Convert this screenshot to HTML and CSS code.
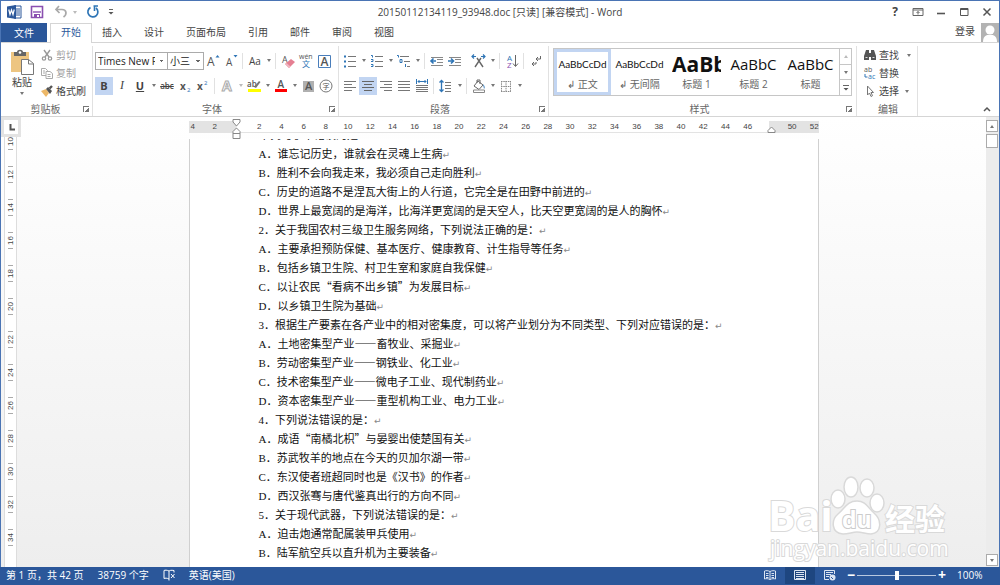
FILE: index.html
```html
<!DOCTYPE html>
<html lang="zh-CN">
<head>
<meta charset="utf-8">
<title>20150112134119_93948.doc - Word</title>
<link rel="stylesheet" href="styles.css">
</head>
<body>
<div class="window">
  <header class="titlebar">
    <div class="quick">
      <svg class="ic16" viewBox="0 0 16 16"><path d="M8 2h7v12H8z" fill="#fff" stroke="#2b579a"/><path d="M9 5h5M9 7h5M9 9h5M9 11h5" stroke="#2b579a"/><path d="M1 2.500L10 1v14L1 13.500z" fill="#2b579a"/><path d="M2.800 5.500l1.200 5 1.500-4.500 1.500 4.500 1.200-5" fill="none" stroke="#fff" stroke-width="1.200"/></svg>
      <button class="tool save" aria-label="保存"><svg class="ic14" viewBox="0 0 14 14"><path d="M1.500 1.500h11v11h-11z" fill="none" stroke="#8a4fb0" stroke-width="1.600"/><path d="M3 7h8" stroke="#8a4fb0" stroke-width="1.400"/><path d="M4 9h6v4H4z" fill="#8a4fb0"/><path d="M7 10h2v2H7z" fill="#fff"/></svg></button>
      <button class="tool undo" aria-label="撤消"><svg class="ic14" viewBox="0 0 14 14"><path d="M5 1L2 4.500 5.500 8M2 4.500h6c5 0 5 5 1.500 7.500" fill="none" stroke="#a9a9a9" stroke-width="1.700"/></svg></button>
      <i class="caret pale"></i>
      <button class="tool redo" aria-label="重复"><svg class="ic14" viewBox="0 0 14 14"><path d="M4.500 2.500a5 5 0 1 0 5.500.5" fill="none" stroke="#2e75b6" stroke-width="1.700"/><path d="M7.500 1H12M8.500 1v5" fill="none" stroke="#2e75b6" stroke-width="1.600"/></svg></button>
      <button class="tool more" aria-label="自定义快速访问工具栏"><svg class="ic8" viewBox="0 0 8 8"><path d="M2 1.500h4" stroke="#666"/><path d="M1.500 4h5L4 6.500z" fill="#555"/></svg></button>
    </div>
    <h1 class="title">20150112134119_93948.doc [只读] [兼容模式] - Word</h1>
    <div class="winctl">
      <button class="tool help" aria-label="帮助">?</button>
      <button class="tool" aria-label="功能区显示选项"><svg class="ic12" viewBox="0 0 12 12"><path d="M1 2.500h10v7H1zM1 4h10" fill="none" stroke="#666"/><path d="M6 8.500V5.500M4.500 7L6 5.500 7.500 7" fill="none" stroke="#666"/></svg></button>
      <button class="tool" aria-label="最小化"><svg class="ic12" viewBox="0 0 12 12"><path d="M2 7.500h8" stroke="#555" stroke-width="1.600"/></svg></button>
      <button class="tool" aria-label="最大化"><svg class="ic12" viewBox="0 0 12 12"><path d="M2.500 2.500h7.500v7H2.500zM2.500 3.500H10" fill="none" stroke="#555"/></svg></button>
      <button class="tool" aria-label="关闭"><svg class="ic12" viewBox="0 0 12 12"><path d="M2.500 2.500l7 7M9.500 2.500l-7 7" stroke="#555" stroke-width="1.500"/></svg></button>
    </div>
  </header>

  <nav class="tabs">
    <button class="file">文件</button>
    <button class="tab current">开始</button>
    <button class="tab">插入</button>
    <button class="tab">设计</button>
    <button class="tab">页面布局</button>
    <button class="tab">引用</button>
    <button class="tab">邮件</button>
    <button class="tab">审阅</button>
    <button class="tab">视图</button>
    <a class="login" href="#">登录</a>
    <svg class="avatar" viewBox="0 0 18 19"><path d="M0 0h18v19H0z" fill="#b3b3b3"/><circle cx="9" cy="7" r="4.500" fill="#fff"/><path d="M2 19c0-5 2.500-7 5-7h4c2.500 0 5 2 5 7z" fill="#fff"/></svg>
  </nav>

  <section class="ribbon">
    <div class="group clipboard">
      <div class="clip">
        <button class="paste">
          <svg class="ic26" viewBox="0 0 26 26"><path d="M2 3h18v20H2z" fill="#edc581"/><path d="M5 3h3c0-3 6-3 6 0h3v4H5z" fill="#666"/><circle cx="11" cy="3.500" r="1.300" fill="#fff"/><path d="M12.500 10.500h7l5 4v11h-12z" fill="#fff" stroke="#777"/><path d="M19.500 10.500v4.500h5" fill="none" stroke="#777"/></svg>
          <span>粘贴</span><i class="caret"></i>
        </button>
        <div class="cliplist">
          <button class="line dim"><svg class="ic12" viewBox="0 0 12 12"><path d="M3 1l5 7M9 1L4 8" stroke="#999" stroke-width="1.400"/><circle cx="3" cy="9.500" r="1.700" fill="none" stroke="#999" stroke-width="1.200"/><circle cx="9" cy="9.500" r="1.700" fill="none" stroke="#999" stroke-width="1.200"/></svg>剪切</button>
          <button class="line dim"><svg class="ic12" viewBox="0 0 12 12"><path d="M.5 1.500h4l2 2v5h-6z" fill="#fff" stroke="#aaa"/><path d="M5 4.500h4l2.500 2v5H5z" fill="#fff" stroke="#aaa"/><path d="M6.500 7.500h3M6.500 9.500h3M2 4h2M2 6h2" stroke="#aaa"/></svg>复制</button>
          <button class="line"><svg class="ic12" viewBox="0 0 12 12"><path d="M0 6l5-2 3 4-3 4z" fill="#edb868"/><path d="M5 4l2-2 4 4-2 3z" fill="#555"/><path d="M8.500 3.500L11 1" stroke="#555" stroke-width="2.400"/></svg>格式刷</button>
        </div>
      </div>
      <div class="caption"><span>剪贴板</span><button class="launch" aria-label="剪贴板选项"></button></div>
    </div>

    <div class="group">
      <div class="row">
        <select class="combo face" aria-label="字体"><option>Times New Roman</option></select>
        <select class="combo size" aria-label="字号"><option>小三</option></select>
        <button class="tool" aria-label="增大字号"><svg class="ic16" viewBox="0 0 16 16"><text x="2" y="13" font-size="12">A</text><path d="M10.500 4.500h4L12.500 2z" fill="#2e75b6"/></svg></button>
        <button class="tool" aria-label="减小字号"><svg class="ic16" viewBox="0 0 16 16"><text x="3" y="13" font-size="10">A</text><path d="M10.500 2h4l-2 2.500z" fill="#2e75b6"/></svg></button>
        <i class="sep"></i>
        <button class="tool" aria-label="更改大小写">Aa</button><i class="caret"></i>
        <i class="sep"></i>
        <button class="tool" aria-label="清除格式"><svg class="ic16" viewBox="0 0 16 16"><text x="2" y="10" font-size="9">A</text><path d="M5 11l6-5 4 3-6 6z" fill="#e57f92"/><path d="M5 11l1.500-1 4 3.500L9 15z" fill="#f0b5c0"/></svg></button>
        <button class="tool" aria-label="拼音指南"><svg class="ic16" viewBox="0 0 16 16"><text x="1" y="6" font-size="7">wén</text><text class="blue" x="4" y="14" font-size="8">文</text></svg></button>
        <button class="tool" aria-label="字符边框"><svg class="ic16" viewBox="0 0 16 16"><path d="M2.500 2.500h12v12h-12z" fill="#fff" stroke="#4a7ebb"/><text x="4.500" y="13" font-size="12" font-weight="600">A</text></svg></button>
      </div>
      <div class="row">
        <button class="tool on" aria-label="加粗"><b>B</b></button>
        <button class="tool" aria-label="倾斜"><em class="serif">I</em></button>
        <button class="tool" aria-label="下划线"><u><b>U</b></u></button><i class="caret"></i>
        <button class="tool strike" aria-label="删除线"><s>abc</s></button>
        <button class="tool" aria-label="下标"><svg class="ic16" viewBox="0 0 16 16"><text x="3" y="12" font-size="10" font-weight="700">x</text><text class="blue" x="10" y="14" font-size="6">2</text></svg></button>
        <button class="tool" aria-label="上标"><svg class="ic16" viewBox="0 0 16 16"><text x="2" y="12" font-size="10" font-weight="700">x</text><text class="blue" x="9" y="7" font-size="6">2</text></svg></button>
        <i class="sep"></i>
        <button class="tool" aria-label="文本效果"><svg class="ic16" viewBox="0 0 16 16"><text x="3" y="13" font-size="14" font-weight="700" class="hollow">A</text></svg></button><i class="caret pale"></i>
        <button class="tool" aria-label="突出显示"><svg class="ic16" viewBox="0 0 16 16"><text x="1" y="9" font-size="8" font-weight="600">ab</text><path d="M8 9l5-6 1.500 1-4.500 6z" fill="#777"/><path d="M2 11h13v3H2z" fill="#ff0"/></svg></button><i class="caret"></i>
        <button class="tool" aria-label="字体颜色"><svg class="ic16" viewBox="0 0 16 16"><text x="4.500" y="10" font-size="10" font-weight="600">A</text><path d="M2 11h12v3H2z" fill="#f00"/></svg></button><i class="caret"></i>
        <button class="tool" aria-label="字符底纹"><svg class="ic16" viewBox="0 0 16 16"><path d="M3 3h11v11H3z" fill="#b0b0b0"/><text x="5" y="12" font-size="11" font-weight="600">A</text></svg></button>
        <button class="tool" aria-label="带圈字符"><svg class="ic16" viewBox="0 0 16 16"><circle cx="8" cy="8" r="6" fill="none" stroke="#777"/><text x="4.500" y="11" font-size="7">字</text></svg></button>
      </div>
      <div class="caption"><span>字体</span><button class="launch" aria-label="字体选项"></button></div>
    </div>

    <div class="group">
      <div class="row">
        <button class="tool" aria-label="项目符号"><svg class="ic16" viewBox="0 0 16 16"><path d="M2 3.500h2M2 8.500h2M2 13.500h2" stroke="#2e75b6" stroke-width="2"/><path d="M6 3.500h8M6 8.500h8M6 13.500h8" stroke="#777"/></svg></button><i class="caret"></i>
        <button class="tool" aria-label="编号"><svg class="ic16" viewBox="0 0 16 16"><path d="M2 2.500h1.500v2M2 6.500h2v2h-2M2 11.500h2v2h-2" fill="none" stroke="#2e75b6"/><path d="M6 3.500h8M6 8.500h8M6 13.500h8" stroke="#777"/></svg></button><i class="caret"></i>
        <button class="tool" aria-label="多级列表"><svg class="ic16" viewBox="0 0 16 16"><path d="M1 2.500h1.500v2M4 6.500h2v3H4zM9.500 11v3" fill="none" stroke="#2e75b6"/><path d="M4 3.500h9M8 8.500h6M11 13.500h3" stroke="#777"/></svg></button><i class="caret"></i>
        <i class="sep"></i>
        <button class="tool" aria-label="减少缩进量"><svg class="ic16" viewBox="0 0 16 16"><path d="M2 4.500h12M8 6.500h6M8 9.500h6M2 12.500h12" stroke="#888"/><path d="M7 8H2M4.500 5.500L2 8l2.500 2.500" fill="none" stroke="#2e75b6" stroke-width="1.600"/></svg></button>
        <button class="tool" aria-label="增加缩进量"><svg class="ic16" viewBox="0 0 16 16"><path d="M2 4.500h12M8 6.500h6M8 9.500h6M2 12.500h12" stroke="#888"/><path d="M1 8h5M4 5.500L6.500 8 4 10.500" fill="none" stroke="#2e75b6" stroke-width="1.600"/></svg></button>
        <i class="sep blank"></i>
        <button class="tool" aria-label="中文版式"><svg class="ic16" viewBox="0 0 16 16"><path d="M4 14l6-9M12 14L6 5" stroke="#666" stroke-width="1.400"/><path d="M5 3.500H1M3 1.500l-2 2 2 2M10 3.500h4M12 1.500l2 2-2 2" fill="none" stroke="#2e75b6" stroke-width="1.200"/></svg></button><i class="caret"></i>
        <i class="sep"></i>
        <button class="tool" aria-label="排序"><svg class="ic16" viewBox="0 0 16 16"><text class="blue" x="3" y="8" font-size="8">A</text><text class="violet" x="3" y="15" font-size="8">Z</text><path d="M11.500 2v11M9 10.500l2.500 3 2.500-3" fill="none" stroke="#666"/></svg></button>
        <i class="sep"></i>
        <button class="tool" aria-label="显示编辑标记"><svg class="ic16" viewBox="0 0 16 16"><path d="M12.500 3v3H8M10 4L8 6l2 2M8 9v2H4M6 9l-2 2 2 2" fill="none" stroke="#666"/></svg></button>
      </div>
      <div class="row">
        <button class="tool" aria-label="左对齐"><svg class="ic16" viewBox="0 0 16 16"><path d="M2 3.500h12M2 6.500h8M2 9.500h12M2 12.500h8" stroke="#777"/></svg></button>
        <button class="tool on" aria-label="居中"><svg class="ic16" viewBox="0 0 16 16"><path d="M2 3.500h12M4 6.500h8M2 9.500h12M4 12.500h8" stroke="#666"/></svg></button>
        <button class="tool" aria-label="右对齐"><svg class="ic16" viewBox="0 0 16 16"><path d="M2 3.500h12M6 6.500h8M2 9.500h12M6 12.500h8" stroke="#777"/></svg></button>
        <button class="tool" aria-label="两端对齐"><svg class="ic16" viewBox="0 0 16 16"><path d="M2 3.500h12M2 6.500h12M2 9.500h12M2 12.500h12" stroke="#777"/></svg></button>
        <button class="tool" aria-label="分散对齐"><svg class="ic16" viewBox="0 0 16 16"><path d="M2.500 1v5M13.500 1v5M4 3.500h8M5.500 2L4 3.500 5.500 5M10.500 2L12 3.500 10.500 5" fill="none" stroke="#2e75b6"/><path d="M2 7.500h12M2 9.500h12M2 11.500h12M2 13.500h12" stroke="#777"/></svg></button>
        <i class="sep"></i>
        <button class="tool" aria-label="行距"><svg class="ic16" viewBox="0 0 16 16"><path d="M3.500 2v12M1.500 4.500l2-2 2 2M1.500 11.500l2 2 2-2" fill="none" stroke="#2e75b6" stroke-width="1.300"/><path d="M7 4.500h6M7 7.500h6M7 10.500h6M7 13.500h6" stroke="#777"/></svg></button><i class="caret"></i>
        <i class="sep"></i>
        <button class="tool" aria-label="底纹"><svg class="ic16" viewBox="0 0 16 16"><path d="M3 8l4-5 5 4-4 4.500zM6 5V2h3v4" fill="none" stroke="#666"/><path d="M12 6c2 2 2 4 1 5z" fill="#2e75b6"/><path d="M2.500 12h11v2.500h-11z" fill="#fff" stroke="#888"/></svg></button><i class="caret"></i>
        <button class="tool" aria-label="边框"><svg class="ic16" viewBox="0 0 16 16"><path d="M3.500 3v10.500M12.500 3v10.500M3 3.500h10M3 13.500h10M8 3v10.500M3 8.500h10" stroke="#888" stroke-dasharray="1.500 .8"/></svg></button><i class="caret"></i>
      </div>
      <div class="caption"><span>段落</span><button class="launch" aria-label="段落选项"></button></div>
    </div>

    <div class="group styles">
      <div class="gallery">
        <button class="tile chosen"><span class="sample normal">AaBbCcDd</span><span class="name">↲ 正文</span></button>
        <button class="tile"><span class="sample normal">AaBbCcDd</span><span class="name">↲ 无间隔</span></button>
        <button class="tile"><span class="sample h1">AaBb</span><span class="name">标题 1</span></button>
        <button class="tile"><span class="sample h2">AaBbC</span><span class="name">标题 2</span></button>
        <button class="tile"><span class="sample h2">AaBbC</span><span class="name">标题</span></button>
        <div class="spin">
          <button class="tool" aria-label="上一行"><i class="caret up pale"></i></button>
          <button class="tool" aria-label="下一行"><i class="caret"></i></button>
          <button class="tool" aria-label="其他样式"><svg class="ic8" viewBox="0 0 8 8"><path d="M1 1.500h6" stroke="#666"/><path d="M1.500 4h5L4 6.500z" fill="#555"/></svg></button>
        </div>
      </div>
      <div class="caption"><span>样式</span><button class="launch" aria-label="样式选项"></button></div>
    </div>

    <div class="group edit">
      <div class="editlist">
        <button class="line"><svg class="ic12" viewBox="0 0 12 12"><path d="M2 1h3v3h2V1h3l2 6v4H7V8H5v3H0V7z" fill="#555"/><path d="M1.500 8.500h2M8.500 8.500h2" stroke="#ddd"/></svg>查找<i class="caret far"></i></button>
        <button class="line"><svg class="ic12" viewBox="0 0 12 12"><text x="0" y="5" font-size="7">ab</text><text class="blue" x="4" y="12" font-size="7">ac</text><path d="M1 7v3h2.500" fill="none" stroke="#2e75b6"/></svg>替换</button>
        <button class="line"><svg class="ic12" viewBox="0 0 12 12"><path d="M3.500 1v9l2-2 1.500 3.500 1.500-.8L7 7.500h2.500z" fill="#fff" stroke="#777"/></svg>选择<i class="caret"></i></button>
      </div>
      <div class="caption"><span>编辑</span></div>
    </div>
    <button class="tool fold" aria-label="折叠功能区"><svg class="ic8" viewBox="0 0 8 8"><path d="M1 6l3-3 3 3" fill="none" stroke="#555" stroke-width="1.500"/></svg></button>
  </section>

  <main class="work">
    <div class="left">
      <div class="tabstop"><svg class="ic12" viewBox="0 0 12 12"><path d="M4.500 3v5.500H9" fill="none" stroke="#555" stroke-width="2"/></svg></div>
      <div class="vruler">
        <span>10</span><span>12</span><span>14</span><span>16</span><span>18</span><span>20</span><span>22</span><span>24</span><span>26</span><span>28</span><span>30</span><span>32</span><span>34</span><span></span>
      </div>
    </div>
    <div class="canvas">
      <div class="hruler">
        <div class="ticks">
          <span>4</span><span>2</span><span></span><span>2</span><span>4</span><span>6</span><span>8</span><span>10</span><span>12</span><span>14</span><span>16</span><span>18</span><span>20</span><span>22</span><span>24</span><span>26</span><span>28</span><span>30</span><span>32</span><span>34</span><span>36</span><span>38</span><span>40</span><span>42</span><span>44</span><span>46</span><span></span><span>50</span><span>52</span>
        </div>
        <svg class="marker start" viewBox="0 0 9 20"><path d="M1 .5h7v2.500L4.500 7 1 3zM4.500 9L8 12.500v7H1v-7zM1 14.500h7" fill="#fff" stroke="#888"/></svg>
        <svg class="marker end" viewBox="0 0 9 20"><path d="M4.500 8L8 11.500v2H1v-2z" fill="#fff" stroke="#888"/></svg>
      </div>
      <article class="page">
        <p class="out">1．下列句子中错误的是</p>
        <p>A．谁忘记历史，谁就会在灵魂上生病</p>
        <p>B．胜利不会向我走来，我必须自己走向胜利</p>
        <p>C．历史的道路不是涅瓦大街上的人行道，它完全是在田野中前进的</p>
        <p>D．世界上最宽阔的是海洋，比海洋更宽阔的是天空人，比天空更宽阔的是人的胸怀</p>
        <p>2．关于我国农村三级卫生服务网络，下列说法正确的是：</p>
        <p>A．主要承担预防保健、基本医疗、健康教育、计生指导等任务</p>
        <p>B．包括乡镇卫生院、村卫生室和家庭自我保健</p>
        <p>C．以让农民<span class="wide">“</span>看病不出乡镇<span class="wide">”</span>为发展目标</p>
        <p>D．以乡镇卫生院为基础</p>
        <p>3．根据生产要素在各产业中的相对密集度，可以将产业划分为不同类型、下列对应错误的是：</p>
        <p>A．土地密集型产业<span class="wide">——</span>畜牧业、采掘业</p>
        <p>B．劳动密集型产业<span class="wide">——</span>钢铁业、化工业</p>
        <p>C．技术密集型产业<span class="wide">——</span>微电子工业、现代制药业</p>
        <p>D．资本密集型产业<span class="wide">——</span>重型机构工业、电力工业</p>
        <p>4．下列说法错误的是：</p>
        <p>A．成语<span class="wide">“</span>南橘北枳<span class="wide">”</span>与晏婴出使楚国有关</p>
        <p>B．苏武牧羊的地点在今天的贝加尔湖一带</p>
        <p>C．东汉使者班超同时也是《汉书》的作者</p>
        <p>D．西汉张骞与唐代鉴真出行的方向不同</p>
        <p>5．关于现代武器，下列说法错误的是：</p>
        <p>A．迫击炮通常配属装甲兵使用</p>
        <p>B．陆军航空兵以直升机为主要装备</p>
      </article>
      <svg class="watermark" viewBox="0 0 190 90">
        <g fill="#fff" stroke="#d9d9d9" stroke-width="1.500">
          <text class="brand" x="0" y="55" font-size="41">Bai</text>
          <ellipse cx="70" cy="23" rx="7" ry="9"/><ellipse cx="83" cy="11" rx="7" ry="10"/><ellipse cx="99" cy="12" rx="7" ry="9"/><ellipse cx="109" cy="27" rx="7" ry="9"/>
          <path d="M89 25c9 0 11 7 17 12 8 7 8 20-3 21-5 0-9-2-14-2s-8 2-14 2c-12-1-12-14-5-20 7-6 9-13 19-13z"/>
          <text class="brand du" x="74" y="52" font-size="23">du</text>
          <text class="cn" x="117" y="54" font-size="30">经验</text>
          <text class="url" x="2" y="80" font-size="21">jingyan.baidu.com</text>
        </g>
      </svg>
    </div>
    <div class="scroll">
      <button class="tool arrow" aria-label="向上滚动"><i class="caret up"></i></button>
      <div class="thumb"></div>
      <button class="tool arrow down" aria-label="向下滚动"><i class="caret"></i></button>
    </div>
  </main>

  <footer class="status">
    <span>第 1 页，共 42 页</span>
    <span>38759 个字</span>
    <svg class="ic12" viewBox="0 0 12 12"><path d="M6 2C4 1 2 1 1 1.500v8c1-.5 3-.5 5 .500zM6 2c1-.6 2-1 5-.5v2M6 10v1.500M8 5l3.500 4M11.500 5L8 9" fill="none" stroke="#fff"/></svg>
    <span>英语(美国)</span>
    <div class="views">
      <button class="view" aria-label="阅读视图"><svg class="ic12" viewBox="0 0 12 12"><path d="M6 2.500C4 1.500 2 1.500.5 2v8c1.500-.5 3.500-.5 5.500.5 2-1 4-1 5.500-.5V2C10 1.500 8 1.500 6 2.500zv8M2 4.500h2.500M2 6.500h2.500M2 8.500h2.500M7.500 4.500H10M7.500 6.500H10M7.500 8.500H10" fill="none" stroke="#dce5f2"/></svg></button>
      <button class="view active" aria-label="页面视图"><svg class="ic12" viewBox="0 0 12 12"><path d="M.5 1.500h11v9H.5zM2 3.500h8M2 5.500h8M2 7.500h8M2 9.500h8" fill="none" stroke="#dce5f2"/></svg></button>
      <button class="view" aria-label="Web 版式视图"><svg class="ic12" viewBox="0 0 12 12"><path d="M5 10.500H.5v-9h10V5M2 3.500h7M2 5.500h5M2 7.500h3" fill="none" stroke="#dce5f2"/><circle cx="8.500" cy="8.500" r="3" fill="#dce5f2"/><path d="M7 8l2 2" stroke="#2b579a"/></svg></button>
    </div>
    <div class="zoom">
      <button class="tool" aria-label="缩小">−</button>
      <input type="range" min="0" max="100" value="50" aria-label="显示比例">
      <button class="tool" aria-label="放大">+</button>
      <span class="pct">100%</span>
    </div>
  </footer>
</div>
</body>
</html>
```
FILE: styles.css
```css
* { box-sizing: border-box; }

body {
  margin: 0;
  font: 10px/14px "Open Sans", "Noto Sans CJK SC", sans-serif;
  color: #444;
}

button, select, input { font: inherit; color: inherit; margin: 0; }
button { padding: 0; border: 0; background: none; white-space: nowrap; }
svg { display: block; flex: none; overflow: visible; }
svg text { fill: #555; }
svg text.blue { fill: #2e75b6; }
svg text.violet { fill: #8a4fb0; }
svg text.hollow { fill: #fff; stroke: #aaa; }

.ic8 { width: 8px; height: 8px; }
.ic12 { width: 12px; height: 12px; }
.ic14 { width: 14px; height: 14px; }
.ic16 { width: 16px; height: 16px; }
.ic26 { width: 28px; height: 26px; }

.window {
  height: 100vh;
  display: flex;
  flex-direction: column;
  border: 1px solid #4a74b4;
  border-bottom: 0;
  background: #fff;
}

.tool {
  display: flex;
  align-items: center;
  justify-content: center;
  width: 18px;
  height: 18px;
  flex: none;
}
.on { background: #c2d5f2; }

.caret {
  display: flex;
  justify-content: center;
  width: 9px;
  flex: none;
}
.caret::before {
  content: "";
  border: 2px solid transparent;
  border-top: 3px solid #777;
  border-bottom: 0;
}
.caret.up::before { border-top: 0; border-bottom: 3px solid #777; }
.caret.pale::before { border-top-color: #bbb; border-bottom-color: #bbb; }

/* title bar */
.titlebar {
  display: grid;
  grid-template-columns: 1fr auto 1fr;
  align-items: center;
  height: 22px;
}
.quick { display: flex; align-items: center; padding-left: 5px; }
.save { margin-left: 6px; }
.undo { margin-left: 6px; }
.redo { margin-left: 5px; }
.more { margin-left: 0; }
.title { margin: 0; font-size: 10px; font-weight: 400; }
.winctl { display: flex; justify-content: flex-end; gap: 5px; padding-right: 3px; }
.help { font-size: 12px; font-weight: 700; }

/* tabs */
.tabs {
  display: flex;
  height: 20px;
  border-bottom: 1px solid #d5d5d5;
}
.file { width: 46px; margin-right: 3px; background: #2b579a; color: #fff; }
.tab { padding: 0 11px 2px; }
.current {
  padding: 0 10px 3px;
  margin-bottom: -1px;
  margin-right: -1px;
  border: 1px solid #d5d5d5;
  border-bottom: 0;
  background: #fff;
  color: #2b579a;
}
.login { margin-left: auto; padding: 1px 6px; color: #444; text-decoration: none; }
.avatar { width: 18px; height: 19px; }

/* ribbon */
.ribbon {
  display: flex;
  height: 74px;
  border-bottom: 1px solid #d5d5d5;
  flex: none;
}
.group {
  display: flex;
  flex-direction: column;
  padding: 2px 3px 0 2px;
  margin-top: 3px;
  border-right: 1px solid #e1e1e1;
}
.row { display: flex; align-items: center; height: 25px; }
.sep { width: 1px; height: 16px; margin: 0 3px 0 2px; background: #e1e1e1; }
.sep.blank { background: none; }
.caption {
  display: flex;
  align-items: center;
  height: 14px;
  margin-top: auto;
}
.caption span { flex: 1; text-align: center; color: #666; }
.launch {
  width: 6px;
  height: 6px;
  border-top: 1px solid #777;
  border-left: 1px solid #777;
  background: linear-gradient(135deg, transparent 55%, #777 55%);
}

.clipboard { width: 92px; padding-top: 0; padding-left: 7px; }
.clip { display: flex; gap: 5px; }
.paste { display: flex; flex-direction: column; align-items: center; width: 28px; padding-top: 3px; }
.paste .caret { margin-top: 3px; }
.cliplist, .editlist { display: flex; flex-direction: column; }
.line { display: flex; align-items: center; gap: 2px; height: 18px; }
.dim { color: #a0a0a0; }

.combo {
  appearance: none;
  height: 18px;
  padding: 0 12px 0 2px;
  border: 1px solid #ababab;
  border-radius: 0;
  background:
    linear-gradient(45deg, transparent 50%, #666 50%) right 5px center / 2px 2px no-repeat,
    linear-gradient(-45deg, transparent 50%, #666 50%) right 3px center / 2px 2px no-repeat,
    #fff;
  color: #222;
}
.face { width: 73px; }
.size { width: 37px; margin-left: -1px; }
.serif { font: italic 12px "Liberation Serif", serif; }
.on b, u b { font-size: 11px; }
.strike { font-size: 8px; font-weight: 600; }

.styles { padding: 2px 4px 0; }
.gallery {
  display: flex;
  height: 48px;
  border: 1px solid #c6c6c6;
}
.tile {
  display: flex;
  flex-direction: column;
  width: 57px;
  padding: 3px 4px;
  overflow: hidden;
  color: #666;
}
.chosen { border: 3px solid #c2d5f2; padding: 0 1px; }
.sample {
  height: 25px;
  line-height: 25px;
  width: 100%;
  overflow: hidden;
  color: #111;
}
.normal { font-family: Lato, sans-serif; }
.h1 { font-size: 21px; font-weight: 700; }
.h2 { font-size: 15px; }
.spin { display: flex; flex-direction: column; border-left: 1px solid #c6c6c6; }
.spin .tool { width: 11px; flex: 1; }
.spin .tool + .tool { border-top: 1px solid #c6c6c6; }

.edit { width: 61px; padding-top: 0; padding-left: 7px; }
.edit .caption { padding-right: 2px; }
.line { gap: 3px; }
.line .far { margin-left: 2px; }
.fold { margin-left: auto; align-self: flex-end; margin-right: 3px; height: 14px; }

/* document area */
.work {
  position: relative;
  display: flex;
  flex: 1;
  min-height: 0;
  background: linear-gradient(#fff, #eee);
}
.left { display: flex; flex-direction: column; width: 20px; }
.tabstop {
  height: 20px;
  padding: 3px;
  border: 3px solid #e3e3e3;
  background: #fff;
  flex: none;
}
.tabstop svg { margin-top: -2px; margin-left: -1px; }
.vruler {
  flex: 1;
  min-height: 0;
  overflow: hidden;
  width: 13px;
  margin-left: 3px;
  border: 1px solid #ddd;
  border-top: 0;
  border-bottom: 0;
  background: #fff;
}
.vruler span {
  display: flex;
  align-items: center;
  justify-content: center;
  height: 33px;
  writing-mode: vertical-rl;
  transform: rotate(180deg);
  font: 8px/11px "Liberation Sans", sans-serif;
  background:
    linear-gradient(#aaa, #aaa) center top 8px / 5px 1px no-repeat,
    linear-gradient(#aaa, #aaa) center bottom 8px / 5px 1px no-repeat;
}
.vruler span:first-child { margin-top: -12px; }

.canvas {
  position: relative;
  display: flex;
  flex-direction: column;
  align-items: center;
  flex: 1;
  min-width: 0;
  overflow: hidden;
}
.hruler {
  position: relative;
  width: 630px;
  height: 12px;
  margin: 4px 0 6px;
  flex: none;
  background: linear-gradient(90deg, #e3e3e3 48px, #fff 48px, #fff 580px, #e3e3e3 580px);
  border-bottom: 1px solid #e3e3e3;
}
.ticks { display: flex; margin: 0 -7px; }
.ticks span {
  flex: 1;
  text-align: center;
  font: 8px/12px "Liberation Sans", sans-serif;
}
.marker { position: absolute; top: -2px; width: 9px; height: 20px; }
.marker.start { left: 43px; }
.marker.end { left: 578px; }

.page {
  width: 630px;
  flex: 1;
  min-height: 0;
  overflow: hidden;
  padding-left: 69px;
  border: 1px solid #d0d0d0;
  border-top: 0;
  border-bottom: 0;
  background: #fff;
  font: 11px/19px "Liberation Serif", "Noto Sans CJK SC", serif;
  color: #111;
}
.page p { margin: 0; height: 19px; white-space: nowrap; }
.page p::after { content: "↵"; font: 9px/11px "DejaVu Sans", sans-serif; color: #888; }
.page .out { margin-top: -13px; margin-left: -16px; }
.page .out::after { content: none; }
.wide { font-family: "Noto Sans CJK SC", sans-serif; line-height: 0; }

.watermark {
  position: absolute;
  right: 28px;
  bottom: 1px;
  width: 190px;
  height: 90px;
}
.watermark text { fill: #fff; paint-order: stroke; stroke-width: 2px; }
.watermark .brand { font-family: "Open Sans", sans-serif; font-weight: 700; }
.watermark .cn { font-family: "Noto Sans CJK SC", sans-serif; font-weight: 700; }
.watermark .du { fill: #fff; stroke: #ccc; }
.watermark .url { font-family: "Open Sans", sans-serif; }

.scroll {
  display: flex;
  flex-direction: column;
  align-items: center;
  width: 13px;
  padding: 3px 1px 1px 0;
  background: #ececec;
}
.arrow { width: 12px; height: 12px; border: 1px solid #ababab; background: #fff; }
.thumb { width: 12px; height: 14px; margin-top: 2px; border: 1px solid #ababab; background: #fff; }
.down { margin-top: auto; }

/* status bar */
.status {
  display: flex;
  align-items: center;
  gap: 14px;
  height: 18px;
  margin: 0 -1px;
  padding: 0 0 2px 6px;
  flex: none;
  background: #2b579a;
  color: #fff;
}
.views { display: flex; margin-left: auto; }
.view { display: flex; align-items: center; justify-content: center; width: 30px; height: 18px; }
.view.active { background: #1e4680; }
.zoom { display: flex; align-items: center; margin-left: -14px; width: 155px; }
.zoom .tool { width: 12px; font-size: 14px; font-weight: 700; }
.zoom input {
  appearance: none;
  width: 79px;
  height: 18px;
  background: linear-gradient(#b8c8e0, #b8c8e0) center / 100% 1px no-repeat;
}
.zoom input::-webkit-slider-thumb {
  appearance: none;
  width: 4px;
  height: 9px;
  background: #fff;
}
.pct { margin-left: 9px; }
```
